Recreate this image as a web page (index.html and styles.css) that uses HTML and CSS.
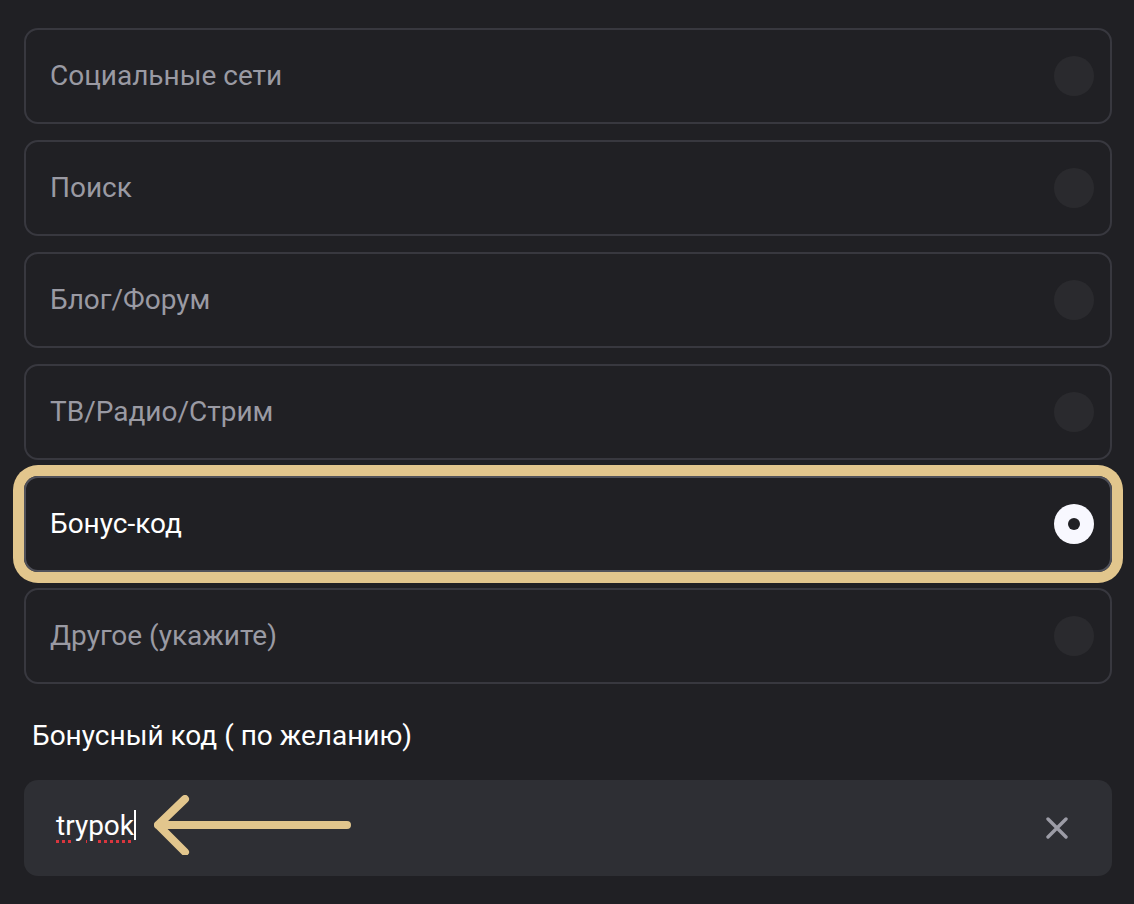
FILE: index.html
```html
<!DOCTYPE html>
<html lang="ru">
<head>
<meta charset="utf-8">
<link rel="stylesheet" href="styles.css">
</head>
<body>
<div class="page">
  <div class="options">
    <div class="option"><span class="opt-text">Социальные сети</span><span class="radio"></span></div>
    <div class="option"><span class="opt-text">Поиск</span><span class="radio"></span></div>
    <div class="option"><span class="opt-text">Блог/Форум</span><span class="radio"></span></div>
    <div class="option"><span class="opt-text">ТВ/Радио/Стрим</span><span class="radio"></span></div>
    <div class="option selected"><span class="opt-text">Бонус-код</span><span class="radio on"></span></div>
    <div class="option"><span class="opt-text">Другое (укажите)</span><span class="radio"></span></div>
  </div>
  <div class="field-label">Бонусный код ( по желанию)</div>
  <div class="input">
    <span class="value">trypok</span><span class="caret"></span>
    <svg class="arrow" width="200" height="60" viewBox="0 0 200 60">
      <path d="M4 30 H193 M31 4 L4 30 L31 57" fill="none" stroke="#e2c68d" stroke-width="8" stroke-linecap="round" stroke-linejoin="round"/>
    </svg>
    <svg class="clear" width="22" height="22" viewBox="0 0 22 22">
      <path d="M2 2 L20 20 M20 2 L2 20" stroke="#9c9ca6" stroke-width="3.4" stroke-linecap="round"/>
    </svg>
  </div>
</div>
</body>
</html>
```
FILE: styles.css
```css
html, body {
  margin: 0;
  padding: 0;
  background: #202024;
}
body {
  font-family: Roboto, "Noto Sans", sans-serif;
  color: #ffffff;
}
.page {
  padding: 28px 22px 0 24px;
}
.options {
  display: flex;
  flex-direction: column;
  gap: 16px;
}
.option {
  height: 96px;
  box-sizing: border-box;
  border: 2px solid #38383f;
  border-radius: 14px;
  display: flex;
  align-items: center;
  justify-content: space-between;
  padding: 0 16px 0 24px;
}
.opt-text {
  font-size: 28px;
  line-height: 32px;
  color: #9a9aa3;
}
.radio {
  width: 40px;
  height: 40px;
  border-radius: 50%;
  background: #2a2a2e;
}
.option.selected {
  border-color: #50515a;
  box-shadow: 0 0 0 11px #e2c68d;
}
.option.selected .opt-text {
  color: #ffffff;
}
.radio.on {
  background: #f8f8ff;
  display: flex;
  align-items: center;
  justify-content: center;
}
.radio.on::after {
  content: "";
  width: 12px;
  height: 12px;
  border-radius: 50%;
  background: #202024;
}
.field-label {
  font-size: 28px;
  line-height: 32px;
  margin: 36px 0 28px 8px;
  color: #ffffff;
}
.input {
  height: 96px;
  background: #2e2f34;
  border-radius: 14px;
  display: flex;
  align-items: center;
  padding: 0 44px 0 32px;
}
.value {
  font-size: 28px;
  line-height: 32px;
  color: #ffffff;
  margin-top: -4px;
  text-decoration: underline dotted #d9363e;
  text-decoration-thickness: 3px;
  text-underline-offset: 5px;
}
.caret {
  width: 2px;
  height: 30px;
  background: #ffffff;
  margin-top: -6px;
}
.arrow {
  margin-left: 18px;
  margin-top: -6px;
}
.clear {
  margin-left: auto;
}
```
